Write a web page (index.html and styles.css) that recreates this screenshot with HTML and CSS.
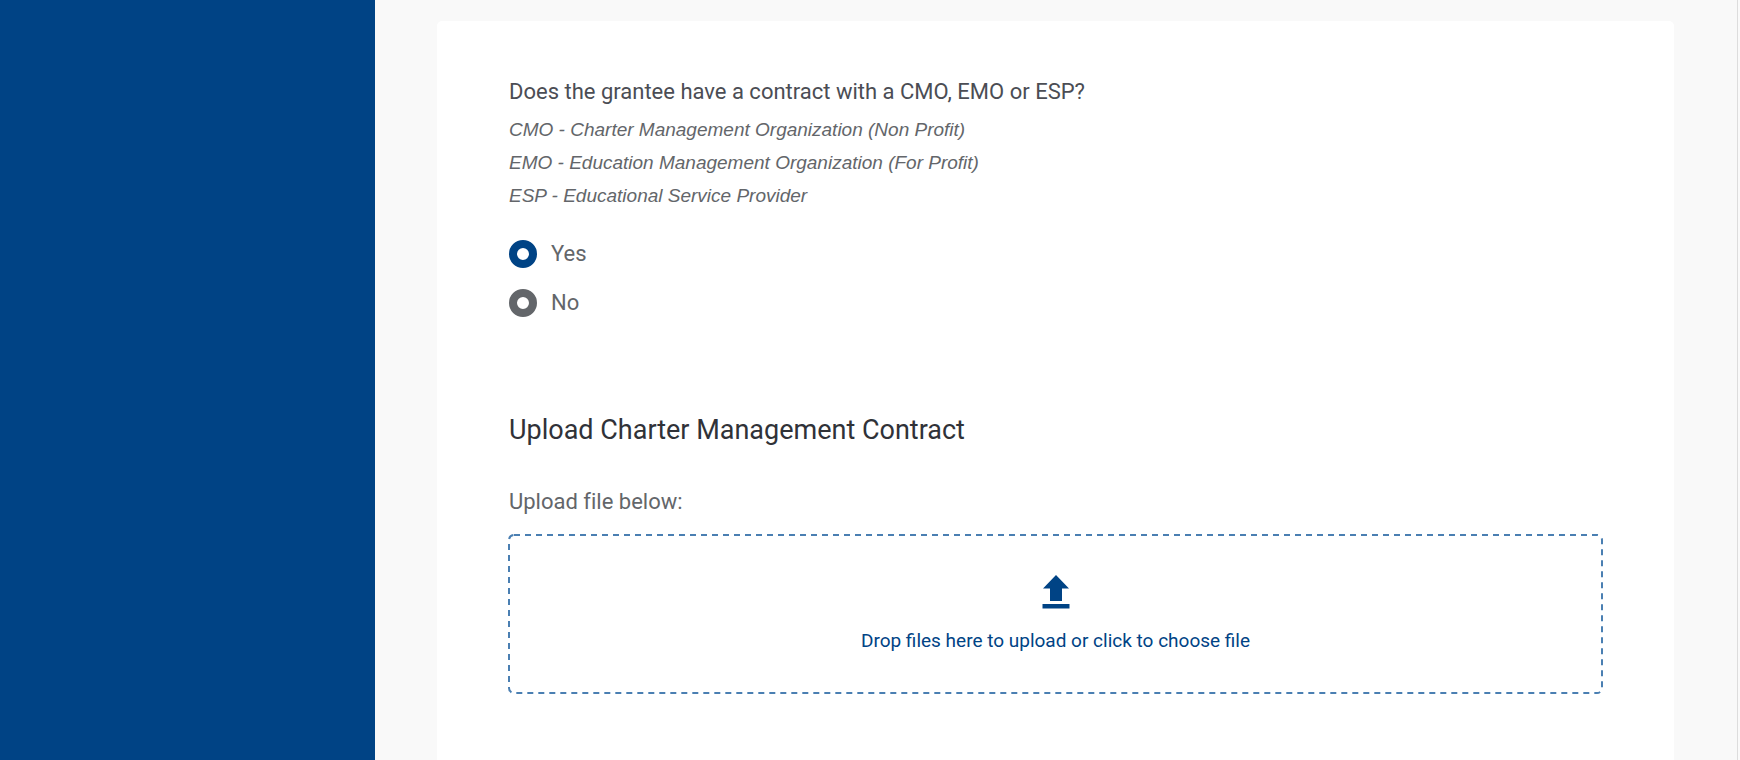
FILE: index.html
```
<!DOCTYPE html>
<html lang="en">
<head>
    <meta charset="UTF-8">
    <meta name="viewport" content="width=device-width, initial-scale=1.0">
    <title>Charter Management Contract</title>
    <link rel="stylesheet" href="styles.css">
</head>
<body>
<aside class="sidebar"></aside>

<main class="content">
    <form class="card">
        <fieldset class="question">
            <legend class="question-title">Does the grantee have a contract with a CMO, EMO or ESP?</legend>
            <div class="question-help">
                <p>CMO - Charter Management Organization (Non Profit)</p>
                <p>EMO - Education Management Organization (For Profit)</p>
                <p>ESP - Educational Service Provider</p>
            </div>
            <div class="radio-group">
                <label class="radio-label" for="contractYes">
                    <input type="radio" id="contractYes" class="radio" name="contract" value="yes" checked />
                    Yes
                </label>
                <label class="radio-label" for="contractNo">
                    <input type="radio" id="contractNo" class="radio" name="contract" value="no" />
                    No
                </label>
            </div>
        </fieldset>

        <section class="upload">
            <h2>Upload Charter Management Contract</h2>
            <p class="upload-label">Upload file below:</p>
            <button type="button" class="dropzone">
                <svg class="dropzone-outline" aria-hidden="true">
                    <rect width="100%" height="100%" rx="5" />
                </svg>
                <svg class="upload-icon" viewBox="0 0 28 34" aria-hidden="true">
                    <path d="M14 0 L27 13.5 H20 V26 H8 V13.5 H1 Z" />
                    <path d="M0.5 29 H27.5 V33.5 H0.5 Z" />
                </svg>
                <span>Drop files here to upload or click to choose file</span>
            </button>
        </section>
    </form>
</main>
</body>
</html>
```

FILE: styles.css
```
body {
    margin: 0;
    min-height: 100vh;
    display: flex;
    background-color: #fafafa;
    font-family: Roboto, Arial, sans-serif;
    font-variant-ligatures: none;
    color: #63666a;
}

.sidebar {
    flex: 0 0 375px;
    background-color: #004385;
}

.content {
    flex: 1;
    display: flex;
    margin-right: 2px;
    padding: 21px 63px 0 62px;
    border-right: 1px solid #dddddd;
    background-color: #f9f9f9;
}

.card {
    flex: 1;
    min-width: 0;
    padding: 56px 72px;
    border-radius: 5px 5px 0 0;
    background-color: #ffffff;
}

.question {
    margin: 0;
    padding: 0;
    border: none;
}

.question-title {
    padding: 0;
    font-size: 22px;
    line-height: 30px;
    color: #4b4d54;
}

.question-help {
    margin-top: 6px;
    font-family: "Liberation Sans", Arial, sans-serif;
    font-size: 19px;
    font-style: italic;
    line-height: 33px;
}

.question-help p {
    margin: 0;
}

.radio-group {
    display: flex;
    flex-direction: column;
    align-items: flex-start;
    gap: 19px;
    margin-top: 27px;
}

.radio-label {
    display: flex;
    align-items: center;
    gap: 14px;
    font-size: 22px;
    line-height: 30px;
    cursor: pointer;
}

.radio {
    appearance: none;
    width: 28px;
    height: 28px;
    margin: 0;
    border: 8px solid #63666a;
    border-radius: 50%;
    background-color: #ffffff;
    cursor: pointer;
}

.radio:checked {
    border-color: #004385;
}

.upload {
    margin-top: 94px;
}

.upload h2 {
    margin: 0;
    font-size: 27px;
    font-weight: 400;
    line-height: 36px;
    color: #303238;
}

.upload-label {
    margin: 39px 0 18px;
    font-size: 22px;
    line-height: 30px;
}

.dropzone {
    position: relative;
    display: flex;
    flex-direction: column;
    align-items: center;
    gap: 20px;
    width: 100%;
    padding: 40px 20px;
    border: none;
    background-color: #ffffff;
    font-family: inherit;
    font-size: 19px;
    line-height: 24px;
    color: #004385;
    cursor: pointer;
}

.dropzone-outline {
    position: absolute;
    top: 0;
    left: 0;
    width: 100%;
    height: 100%;
    overflow: visible;
    fill: none;
    stroke: #4a7fb2;
    stroke-width: 2px;
    stroke-dasharray: 6 5;
}

.upload-icon {
    width: 28px;
    height: 34px;
    fill: #004385;
}
```
